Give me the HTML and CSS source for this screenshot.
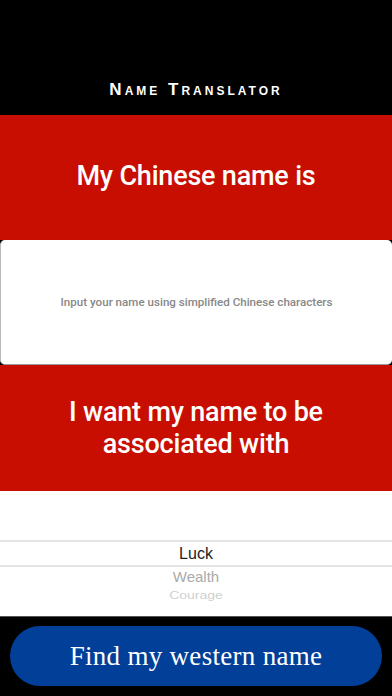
FILE: index.html
```html
<!DOCTYPE html>
<html>
<head>
<meta charset="utf-8">
<link rel="stylesheet" href="styles.css">
</head>
<body>
<div class="app">
  <header class="topbar">
    <h1 class="brand">Name Translator</h1>
  </header>
  <section class="prompt prompt-first">
    <h2 class="prompt-text">My Chinese name is</h2>
  </section>
  <div class="input-box">
    <span class="placeholder">Input your name using simplified Chinese characters</span>
  </div>
  <section class="prompt prompt-second">
    <h2 class="prompt-text">I want my name to be<br>associated with</h2>
  </section>
  <div class="picker">
    <div class="picker-blank"></div>
    <div class="picker-selected">Luck</div>
    <div class="picker-next">Wealth</div>
    <div class="picker-far">Courage</div>
  </div>
  <footer class="footer">
    <button class="cta">Find my western name</button>
  </footer>
</div>
</body>
</html>
```

FILE: styles.css
```css
* { box-sizing: border-box; }
html, body { margin: 0; padding: 0; }
body {
  width: 392px;
  height: 696px;
  overflow: hidden;
  background: #000;
  font-family: Roboto, "Liberation Sans", sans-serif;
}
.app {
  display: flex;
  flex-direction: column;
  height: 696px;
}
.topbar {
  height: 115px;
  background: #000;
  display: flex;
  align-items: flex-end;
  justify-content: center;
  padding-bottom: 16px;
}
.brand {
  margin: 0;
  color: #fff;
  font-family: "Liberation Sans", sans-serif;
  font-weight: 700;
  font-size: 17px;
  font-variant: small-caps;
  letter-spacing: 3px;
  line-height: 18px;
}
.prompt {
  background: #c70e00;
  display: flex;
  align-items: center;
  justify-content: center;
  text-align: center;
}
.prompt-first {
  height: 125px;
  align-items: flex-start;
  padding-top: 45px;
}
.prompt-second {
  height: 126px;
}
.prompt-text {
  margin: 0;
  color: #fff;
  font-weight: 500;
  font-size: 27px;
  line-height: 32px;
  letter-spacing: -0.2px;
}
.input-box {
  height: 125px;
  background: #fff;
  border-radius: 5px;
  border-left: 1px solid #bbb;
  border-bottom: 1px solid #999;
  display: flex;
  align-items: center;
  justify-content: center;
}
.placeholder {
  color: #888;
  font-size: 11.6px;
  font-weight: 500;
}
.picker {
  height: 125px;
  background: #fff;
  display: flex;
  flex-direction: column;
  align-items: stretch;
  font-family: "Liberation Sans", sans-serif;
  text-align: center;
}
.picker-blank {
  height: 49px;
}
.picker-selected {
  height: 27px;
  border-top: 2px solid #e4e4e4;
  border-bottom: 2px solid #e4e4e4;
  color: #222;
  font-size: 16px;
  line-height: 23px;
}
.picker-next {
  color: #aaa;
  font-size: 15px;
  line-height: 20px;
}
.picker-far {
  color: #d0d0d0;
  font-size: 14px;
  line-height: 16px;
  margin-top: 2px;
  transform: scaleY(0.75);
  transform-origin: top center;
}
.footer {
  flex: 1;
  background: #000;
  border-top: 1px solid #555;
  padding: 9px 10px 10px;
  display: flex;
}
.cta {
  flex: 1;
  height: 60px;
  border: none;
  border-radius: 30px;
  background: #023f98;
  color: #fff;
  font-family: "Liberation Serif", serif;
  font-size: 27px;
  letter-spacing: 0.3px;
  padding: 0;
}
```
